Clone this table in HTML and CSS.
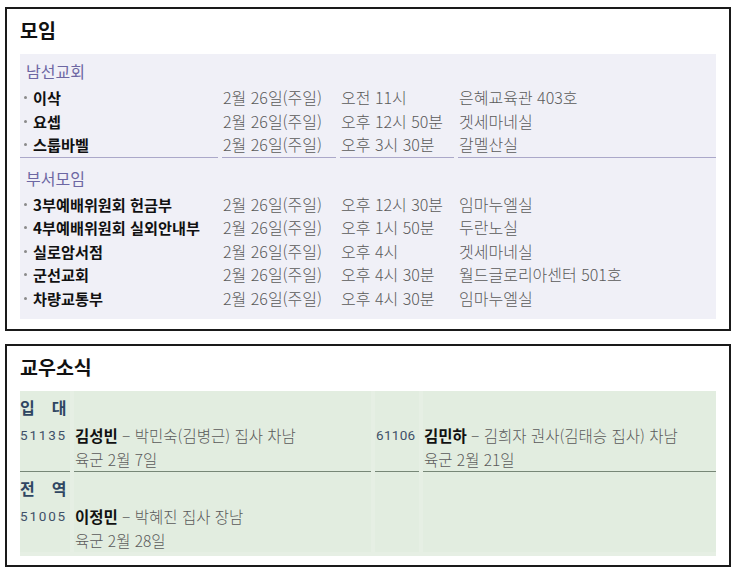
FILE: index.html
```html
<!DOCTYPE html>
<html lang="ko">
<head>
<meta charset="utf-8">
<title>모임 · 교우소식</title>
<link rel="stylesheet" href="styles.css">
</head>
<body>
<div class="page">
  <section class="box">
    <h2 class="box-title">모임</h2>
    <div class="sched">
      <div class="grp">남선교회</div>
      <div class="c name">이삭</div><div class="c">2월 26일(주일)</div><div class="c">오전 11시</div><div class="c">은혜교육관 403호</div>
      <div class="c name">요셉</div><div class="c">2월 26일(주일)</div><div class="c">오후 12시 50분</div><div class="c">겟세마네실</div>
      <div class="c name end">스룹바벨</div><div class="c end">2월 26일(주일)</div><div class="c end">오후 3시 30분</div><div class="c end">갈멜산실</div>
      <div class="grp next">부서모임</div>
      <div class="c name">3부예배위원회 헌금부</div><div class="c">2월 26일(주일)</div><div class="c">오후 12시 30분</div><div class="c">임마누엘실</div>
      <div class="c name">4부예배위원회 실외안내부</div><div class="c">2월 26일(주일)</div><div class="c">오후 1시 50분</div><div class="c">두란노실</div>
      <div class="c name">실로암서점</div><div class="c">2월 26일(주일)</div><div class="c">오후 4시</div><div class="c">겟세마네실</div>
      <div class="c name">군선교회</div><div class="c">2월 26일(주일)</div><div class="c">오후 4시 30분</div><div class="c">월드글로리아센터 501호</div>
      <div class="c name">차량교통부</div><div class="c">2월 26일(주일)</div><div class="c">오후 4시 30분</div><div class="c">임마누엘실</div>
    </div>
  </section>

  <section class="box second">
    <h2 class="box-title">교우소식</h2>
    <div class="news">
      <div class="nh">입대</div><div class="nc"></div><div class="nc"></div><div class="nc"></div>
      <div class="nn end">51135</div>
      <div class="nt end"><b>김성빈</b> – 박민숙(김병근) 집사 차남<br>육군 2월 7일</div>
      <div class="nn alt end">61106</div>
      <div class="nt end"><b>김민하</b> – 김희자 권사(김태승 집사) 차남<br>육군 2월 21일</div>
      <div class="nh">전역</div><div class="nc"></div><div class="nc"></div><div class="nc"></div>
      <div class="nn">51005</div>
      <div class="nt"><b>이정민</b> – 박혜진 집사 장남<br>육군 2월 28일</div>
      <div class="nc"></div><div class="nc"></div>
    </div>
  </section>
</div>
</body>
</html>
```

FILE: styles.css
```css
html, body {
  margin: 0;
  padding: 0;
  background: #ffffff;
}

body {
  font-family: "Noto Sans CJK KR", "Noto Sans", sans-serif;
  color: #111;
}

.page {
  padding: 7px 0 0 5px;
  width: 726px;
}

.box {
  border: 2px solid #1a1a1a;
  padding: 9px 13px 10px 13px;
}

.box.second {
  margin-top: 13px;
  padding-bottom: 9px;
}

.box-title {
  margin: 0 0 12px 0;
  font-size: 19.5px;
  line-height: 24px;
  font-weight: 700;
  color: #111;
}

/* ---------- schedule table ---------- */
.sched {
  display: grid;
  grid-template-columns: 198px 114px 114px 1fr;
  column-gap: 4px;
  background: #f0f0f7;
  padding-bottom: 9px;
}

.grp {
  grid-column: 1 / -1;
  height: 32px;
  box-sizing: border-box;
  padding: 3px 0 0 6px;
  line-height: 28px;
  font-size: 16px;
  color: #6d67a3;
}

.grp.next {
  height: 35px;
  padding-top: 6px;
}

.c {
  height: 23.5px;
  line-height: 23.5px;
  font-size: 16px;
  font-weight: 300;
  color: #5a5a5a;
  white-space: nowrap;
  padding-left: 1px;
}

.c.end {
  border-bottom: 1px solid #aba8c9;
}

.c.name {
  font-weight: 700;
  color: #111;
  padding-left: 4px;
  display: flex;
  align-items: center;
  font-size: 15.2px;
}

.c.name::before {
  content: "";
  width: 3px;
  height: 3px;
  border-radius: 50%;
  background: #8a8a8a;
  margin-right: 6px;
  flex: none;
}

/* ---------- news table ---------- */
.news {
  display: grid;
  grid-template-columns: 50px 297px 44px 1fr;
  column-gap: 4px;
  background: #e6efe4;
  padding-bottom: 4px;
}

.nh, .nc, .nn, .nt {
  background: #e2ede0;
}

.nh {
  height: 32px;
  line-height: 32px;
  font-size: 16px;
  font-weight: 700;
  color: #2f4662;
  letter-spacing: 17px;
  white-space: nowrap;
}

.nn {
  font-family: "Roboto", "Liberation Sans", sans-serif;
  font-size: 13.5px;
  line-height: 24px;
  color: #3f5168;
  letter-spacing: 1.8px;
}

.nn.alt {
  letter-spacing: 0.3px;
  padding-left: 1px;
}

.nt {
  font-size: 15.5px;
  line-height: 24px;
  font-weight: 300;
  color: #5a5a5a;
  white-space: nowrap;
  padding-left: 1px;
}

.nt b {
  font-weight: 700;
  color: #111;
}

.end {
  border-bottom: 1px solid #778777;
}

.news .nn.end, .news .nt.end {
  height: 48px;
}
```
